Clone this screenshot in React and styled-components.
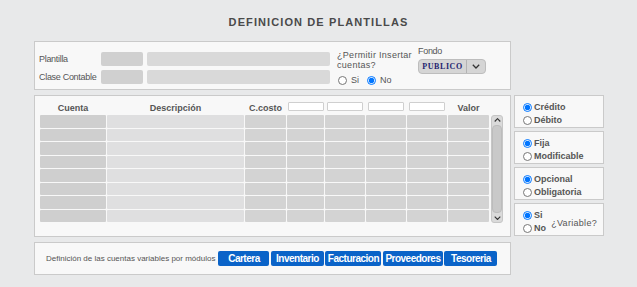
import styled, { createGlobalStyle } from "styled-components";

const GlobalStyle = createGlobalStyle`
  body {
    margin: 0;
    background: #e8e9ea;
    font-family: "Liberation Sans", Arial, sans-serif;
  }
`;

const Page = styled.div`
  width: 637px;
  height: 287px;
  overflow: hidden;
`;

const Title = styled.h1`
  margin: 15px 0 12px;
  text-align: center;
  font-size: 11px;
  line-height: 14px;
  letter-spacing: 1.1px;
  font-weight: bold;
  color: #4a4a4a;
`;

const Layout = styled.div`
  display: grid;
  grid-template-columns: 477px 90px;
  grid-template-rows: 49px 142px 33px;
  column-gap: 3px;
  row-gap: 5px;
  margin-left: 34px;
`;

const Panel = styled.div`
  box-sizing: border-box;
  background: #f8f8f8;
  border: 1px solid #cacaca;
  grid-column: ${(p) => p.col || "auto"};
  grid-row: ${(p) => p.row || "auto"};
`;

const TopPanel = styled(Panel)`
  display: flex;
  padding: 10px 4px 0 4px;
`;

const Fields = styled.div`
  display: grid;
  grid-template-columns: 58px 42px 183px;
  grid-auto-rows: 14px;
  column-gap: 4px;
  row-gap: 4px;
`;

const Label = styled.span`
  font-size: 9px;
  line-height: ${(p) => p.lh || 14}px;
  letter-spacing: -0.3px;
  color: #555;
  white-space: nowrap;
`;

const Field = styled.div`
  border-radius: 2px;
  background: ${(p) => (p.light ? "#d9d9d9" : "#d0d0d0")};
`;

const Permit = styled.div`
  width: 81px;
  margin: -2px 0 0 7px;
  display: flex;
  flex-direction: column;
`;

const Question = styled.span`
  font-size: 9px;
  line-height: 10px;
  letter-spacing: 0.3px;
  color: #555;
`;

const RadioRow = styled.label`
  display: flex;
  align-items: center;
  gap: ${(p) => p.gap || 4}px;
  font-size: 9px;
  line-height: 13px;
  color: #555;
  font-weight: ${(p) => (p.bold ? "bold" : "normal")};
  margin-right: ${(p) => p.mr || 0}px;
`;

const InlineRadios = styled.div`
  display: flex;
  margin-top: 4px;
  margin-left: 1px;
`;

const Radio = styled.input.attrs({ type: "radio" })`
  width: 9px;
  height: 9px;
  margin: 0;
`;

const Fondo = styled.div`
  margin-top: -6px;
  display: flex;
  flex-direction: column;
  gap: 3px;
`;

const Select = styled.div`
  display: flex;
  width: 68px;
  height: 15px;
  box-sizing: border-box;
  border: 1px solid #bdbdbd;
  border-radius: 4px;
  background: #d5d5d5;
  overflow: hidden;
`;

const SelectValue = styled.span`
  width: 47px;
  text-align: center;
  font-family: "Liberation Serif", "Times New Roman", serif;
  font-weight: bold;
  font-size: 8px;
  line-height: 13px;
  letter-spacing: 0.6px;
  color: #1d2470;
  border-right: 1px solid #b3b3b3;
`;

const SelectButton = styled.span`
  flex: 1;
  display: flex;
  align-items: center;
  justify-content: center;
`;

const GridPanel = styled(Panel)`
  display: flex;
  padding: 5px 5px 0 5px;
`;

const Table = styled.div`
  display: grid;
  grid-template-columns: 66px 137px 41px 37px 40px 40px 40px 41px;
  grid-template-rows: 13px repeat(8, 12.5px);
  gap: 1px;
  width: 449px;
`;

const HeadLabel = styled.span`
  align-self: end;
  text-align: center;
  font-size: 9px;
  line-height: 11px;
  font-weight: bold;
  color: #555;
`;

const HeadInput = styled.div`
  align-self: start;
  justify-self: center;
  margin-top: 1px;
  width: 36px;
  height: 9px;
  box-sizing: border-box;
  background: #fff;
  border: 1px solid #cfcfcf;
  border-radius: 1px;
`;

const Cell = styled.div`
  border-radius: 1px;
  background: ${(p) => p.bg};
`;

const Scrollbar = styled.div`
  margin: 14px 0 0 2px;
  width: 12px;
  height: 108px;
  box-sizing: border-box;
  border: 1px solid #c6c6c6;
  border-radius: 3px;
  background: #dadada;
  display: flex;
  flex-direction: column;
  align-items: center;
  justify-content: space-between;
  padding: 2px 0;
`;

const Thumb = styled.div`
  flex: 1;
  width: 8px;
  margin: 3px 0;
  border-radius: 4px;
  background: #c9c9c9;
  border: 1px solid #bcbcbc;
`;

const Side = styled.div`
  grid-column: 2;
  grid-row: 2;
  display: flex;
  flex-direction: column;
  gap: 3px;
`;

const OptionPanel = styled(Panel)`
  height: 33px;
  display: flex;
  align-items: flex-start;
  padding: 5px 6px 0 8px;
`;

const OptionList = styled.div`
  display: flex;
  flex-direction: column;
`;

const SideQuestion = styled.span`
  margin-left: auto;
  margin-top: 9px;
  font-size: 9px;
  line-height: 11px;
  letter-spacing: 0.3px;
  color: #555;
`;

const BottomPanel = styled(Panel)`
  display: flex;
  align-items: center;
  padding-left: 11px;
`;

const Modules = styled.span`
  font-size: 8px;
  color: #555;
  margin-right: 3px;
`;

const Buttons = styled.div`
  display: flex;
  gap: 1.5px;
`;

const ModuleButton = styled.button`
  height: 15px;
  padding: 0;
  width: ${(p) => p.w}px;
  border: none;
  border-radius: 2px;
  background: #0a63c8;
  color: #fff;
  font-family: "Liberation Sans", Arial, sans-serif;
  font-weight: bold;
  font-size: 10px;
  letter-spacing: -0.5px;
  line-height: 15px;
  white-space: nowrap;
`;

const Chevron = ({ up, size = 8 }) => (
  <svg width={size} height={size * 0.6} viewBox="0 0 10 6">
    <path
      d={up ? "M1 5 L5 1 L9 5" : "M1 1 L5 5 L9 1"}
      fill="none"
      stroke="#333"
      strokeWidth="1.6"
    />
  </svg>
);

const columnColors = ["#cfcfcf", "#dfdfe0", "#d3d3d3", "#d3d3d3", "#d3d3d3", "#d3d3d3", "#d3d3d3", "#d3d3d3"];

const options = [
  { name: "tipo", items: ["Crédito", "Débito"] },
  { name: "modo", items: ["Fija", "Modificable"] },
  { name: "uso", items: ["Opcional", "Obligatoria"] },
];

const modules = [
  ["Cartera", 51],
  ["Inventario", 53],
  ["Facturacion", 56],
  ["Proveedores", 60],
  ["Tesoreria", 53],
];

const App = () => {
  return (
    <Page>
      <GlobalStyle />
      <Title>DEFINICION DE PLANTILLAS</Title>
      <Layout>
        <TopPanel col="1" row="1">
          <Fields>
            <Label>Plantilla</Label>
            <Field />
            <Field light />
            <Label>Clase Contable</Label>
            <Field />
            <Field light />
          </Fields>
          <Permit>
            <Question>¿Permitir Insertar cuentas?</Question>
            <InlineRadios>
              <RadioRow mr={8}>
                <Radio name="permitir" /> Si
              </RadioRow>
              <RadioRow>
                <Radio name="permitir" defaultChecked /> No
              </RadioRow>
            </InlineRadios>
          </Permit>
          <Fondo>
            <Label lh={10}>Fondo</Label>
            <Select>
              <SelectValue>PUBLICO</SelectValue>
              <SelectButton>
                <Chevron />
              </SelectButton>
            </Select>
          </Fondo>
        </TopPanel>

        <GridPanel col="1" row="2">
          <Table>
            <HeadLabel>Cuenta</HeadLabel>
            <HeadLabel>Descripción</HeadLabel>
            <HeadLabel>C.costo</HeadLabel>
            <HeadInput />
            <HeadInput />
            <HeadInput />
            <HeadInput />
            <HeadLabel>Valor</HeadLabel>
            {Array.from({ length: 8 }).map((_, r) =>
              columnColors.map((bg, c) => <Cell key={`${r}-${c}`} bg={bg} />)
            )}
          </Table>
          <Scrollbar>
            <Chevron up size={7} />
            <Thumb />
            <Chevron size={7} />
          </Scrollbar>
        </GridPanel>

        <Side>
          {options.map((group) => (
            <OptionPanel key={group.name}>
              <OptionList>
                {group.items.map((item, i) => (
                  <RadioRow bold gap={2} key={item}>
                    <Radio name={group.name} defaultChecked={i === 0} /> {item}
                  </RadioRow>
                ))}
              </OptionList>
            </OptionPanel>
          ))}
          <OptionPanel>
            <OptionList>
              <RadioRow bold gap={2}>
                <Radio name="variable" defaultChecked /> Si
              </RadioRow>
              <RadioRow bold gap={2}>
                <Radio name="variable" /> No
              </RadioRow>
            </OptionList>
            <SideQuestion>¿Variable?</SideQuestion>
          </OptionPanel>
        </Side>

        <BottomPanel col="1" row="3">
          <Modules>Definición de las cuentas variables por módulos</Modules>
          <Buttons>
            {modules.map(([name, w]) => (
              <ModuleButton key={name} w={w}>
                {name}
              </ModuleButton>
            ))}
          </Buttons>
        </BottomPanel>
      </Layout>
    </Page>
  );
};

export default App;
